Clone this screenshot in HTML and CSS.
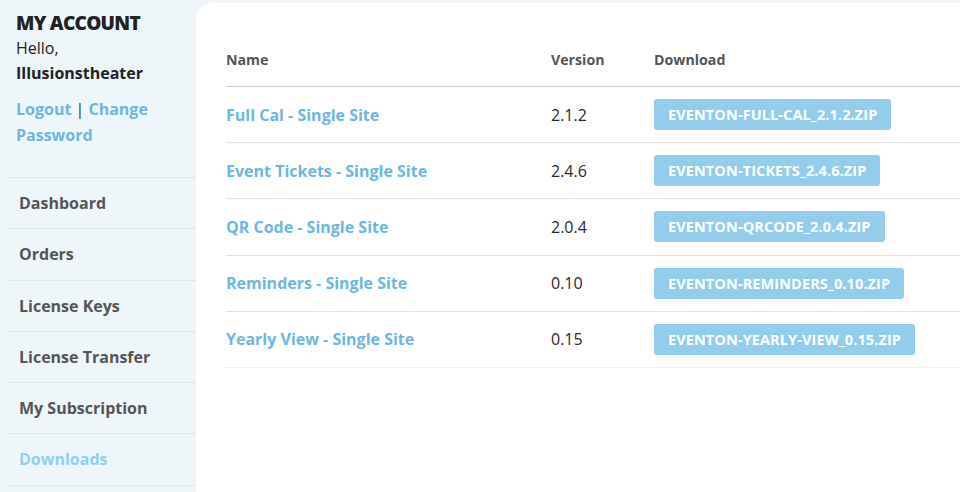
FILE: index.html
```html
<!DOCTYPE html>
<html lang="en">
<head>
    <meta charset="UTF-8">
    <meta name="viewport" content="width=device-width, initial-scale=1.0">
    <title>My Account - Downloads</title>
    <link rel="stylesheet" href="styles.css">
</head>
<body>
    <div class="page">
        <aside class="sidebar">
            <h1 class="account-title">MY ACCOUNT</h1>
            <p class="hello">Hello,<br><strong>Illusionstheater</strong></p>
            <p class="account-links"><a href="#">Logout</a> <span class="sep">|</span> <a href="#">Change Password</a></p>
            <ul class="account-nav">
                <li><a href="#">Dashboard</a></li>
                <li><a href="#">Orders</a></li>
                <li><a href="#">License Keys</a></li>
                <li><a href="#">License Transfer</a></li>
                <li><a href="#">My Subscription</a></li>
                <li class="active"><a href="#">Downloads</a></li>
            </ul>
        </aside>

        <main class="content">
            <table class="downloads">
                <thead>
                    <tr>
                        <th class="col-name">Name</th>
                        <th class="col-version">Version</th>
                        <th>Download</th>
                    </tr>
                </thead>
                <tbody>
                    <tr>
                        <td><a class="product" href="#">Full Cal - Single Site</a></td>
                        <td>2.1.2</td>
                        <td><a class="zip" href="#">eventon-full-cal_2.1.2.zip</a></td>
                    </tr>
                    <tr>
                        <td><a class="product" href="#">Event Tickets - Single Site</a></td>
                        <td>2.4.6</td>
                        <td><a class="zip" href="#">eventon-tickets_2.4.6.zip</a></td>
                    </tr>
                    <tr>
                        <td><a class="product" href="#">QR Code - Single Site</a></td>
                        <td>2.0.4</td>
                        <td><a class="zip" href="#">eventon-qrcode_2.0.4.zip</a></td>
                    </tr>
                    <tr>
                        <td><a class="product" href="#">Reminders - Single Site</a></td>
                        <td>0.10</td>
                        <td><a class="zip" href="#">eventon-reminders_0.10.zip</a></td>
                    </tr>
                    <tr>
                        <td><a class="product" href="#">Yearly View - Single Site</a></td>
                        <td>0.15</td>
                        <td><a class="zip" href="#">eventon-yearly-view_0.15.zip</a></td>
                    </tr>
                </tbody>
            </table>
        </main>
    </div>
</body>
</html>
```

FILE: styles.css
```css
body {
    margin: 0;
    background-color: #eef6fa;
    color: #333;
    font-family: "Open Sans", Arial, sans-serif;
}
a {
    text-decoration: none;
}
.page {
    display: flex;
    min-height: 492px;
}
.sidebar {
    width: 196px;
    flex-shrink: 0;
    padding-top: 11px;
}
.account-title {
    margin: 0 0 1px 16px;
    font-size: 19px;
    font-weight: 800;
    letter-spacing: -0.7px;
    line-height: 24px;
    color: #222;
}
.hello {
    margin: 0 0 10px 16px;
    font-size: 16px;
    line-height: 25px;
    color: #222;
}
.account-links {
    margin: 0 10px 29px 16px;
    font-size: 16px;
    font-weight: 700;
    line-height: 26px;
}
.account-links a {
    color: #6cb6e2;
}
.account-links .sep {
    font-weight: 400;
    color: #333;
}
.account-nav {
    list-style: none;
    margin: 0 0 0 6px;
    padding: 0;
    border-top: 1px solid #dde8ee;
}
.account-nav li {
    border-bottom: 1px solid #dde8ee;
}
.account-nav a {
    display: block;
    padding: 0 13px;
    font-size: 16px;
    font-weight: 700;
    line-height: 50.3px;
    color: #555;
}
.account-nav li.active a {
    color: #8ed0f5;
}
.content {
    flex: 1;
    margin-top: 3px;
    background-color: #fff;
    border-top-left-radius: 16px;
    padding: 31px 0 0 30px;
}
.downloads {
    width: 100%;
    border-collapse: collapse;
}
.downloads th {
    text-align: left;
    font-size: 14.2px;
    font-weight: 700;
    line-height: 22px;
    color: #555;
    padding: 15px 0;
    border-bottom: 1px solid #cfcfcf;
}
.downloads .col-name {
    width: 325px;
}
.downloads .col-version {
    width: 103px;
}
.downloads td {
    height: 55.2px;
    padding: 0;
    font-size: 16px;
    line-height: 22px;
    color: #2a2a2a;
    vertical-align: middle;
    border-bottom: 1px solid #e2e2e2;
}
.downloads tbody tr:last-child td {
    border-bottom-color: #f0f0f0;
}
.product {
    font-size: 16px;
    font-weight: 700;
    color: #6cb6e2;
}
.zip {
    display: inline-block;
    padding: 0 14px;
    background-color: #93cdeb;
    border-radius: 3px;
    color: #fff;
    font-size: 14.5px;
    font-weight: 700;
    letter-spacing: 0.1px;
    line-height: 31px;
    text-transform: uppercase;
    vertical-align: middle;
}
```
